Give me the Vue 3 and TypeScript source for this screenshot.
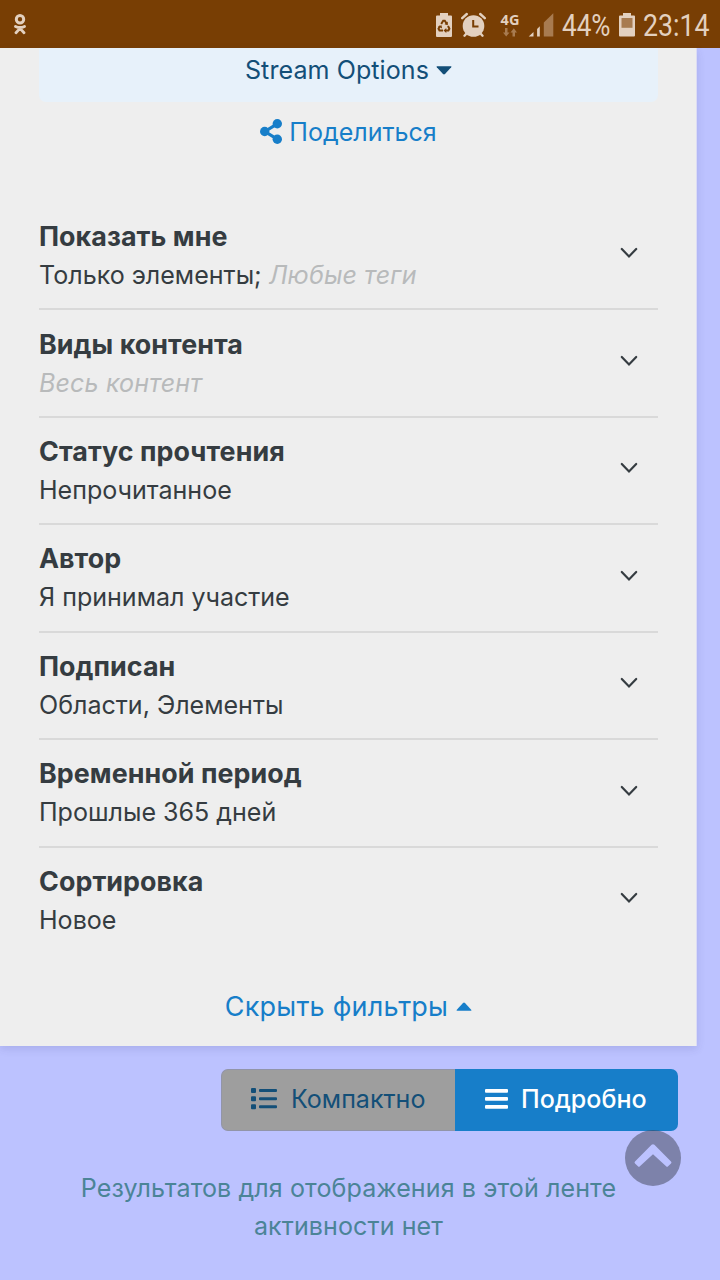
<script setup lang="ts">
interface FilterRow {
  title: string
  value?: string
  muted?: string
}

const filters: FilterRow[] = [
  { title: 'Показать мне', value: 'Только элементы;', muted: 'Любые теги' },
  { title: 'Виды контента', muted: 'Весь контент' },
  { title: 'Статус прочтения', value: 'Непрочитанное' },
  { title: 'Автор', value: 'Я принимал участие' },
  { title: 'Подписан', value: 'Области, Элементы' },
  { title: 'Временной период', value: 'Прошлые 365 дней' },
  { title: 'Сортировка', value: 'Новое' },
]
</script>

<template>
  <div class="screen">
    <header class="status">
      <svg class="ok" width="12" height="21" viewBox="0 0 12 21" fill="none" stroke="#e3d0bf">
        <circle cx="6" cy="5.2" r="3.7" stroke-width="3" />
        <path d="M1.5 12.4Q6 14.6 10.5 12.4M6 14.4L2 18.7M6 14.4L10 18.7" stroke-width="2.8" stroke-linecap="round" />
      </svg>
      <div class="status-right">
        <svg class="recycle" width="16" height="25" viewBox="0 0 16 25">
          <path d="M4 0h8v2.500h3q1 0 1 1v19.500q0 1-1 1H1q-1 0-1-1V3.500q0-1 1-1h3z" fill="#e3d0bf" />
          <g fill="none" stroke="#783e04" stroke-width="2">
            <path d="M5.200 11l2-3.200h1.600l1.900 3M12 13l1.400 2.800-1 1.800H9.300M7 17.600H3.500l-1-1.800 1.500-2.700" />
          </g>
          <path d="M11.800 8.500v3.800l-3.300-1zM10.300 15v5l-2.800-2.500zM2 13.300l3.500-1 .6 3.300z" fill="#783e04" />
        </svg>
        <svg class="alarm" width="25" height="26" viewBox="0 0 25 26">
          <circle cx="12.500" cy="14" r="10.800" fill="#e3d0bf" />
          <path d="M1.200 6.200L5.800 2M23.800 6.200L19.200 2M5.500 21.500l-2 2.200M19.500 21.500l2 2.200" stroke="#e3d0bf" stroke-width="2.400" stroke-linecap="round" />
          <path d="M12.200 8v6.500H17.500" fill="none" stroke="#783e04" stroke-width="2" />
        </svg>
        <div class="network">
          <span>4G</span>
          <svg width="14" height="9" viewBox="0 0 14 9" fill="#a87b50">
            <path d="M2 0h2.500v4.500h2L3.200 8.500 0 4.500h2zM9.500 8.500H12v-4h2L10.800.300 7.500 4.500h2z" />
          </svg>
        </div>
        <svg class="signal" width="25" height="24" viewBox="0 0 25 24">
          <path d="M-.3 23.500L4.500 19V23.500zM8.100 23.500V16L10.800 13.200V23.500z" fill="#e3d0bf" />
          <path d="M14.800 23.500V9.500L24.300.300V23.500z" fill="#a87b50" />
        </svg>
        <svg class="status-text percent" width="50" height="44" viewBox="0 0 50 44">
          <text x="0" y="33" textLength="48.500" lengthAdjust="spacingAndGlyphs">44%</text>
        </svg>
        <svg class="battery" width="16" height="24" viewBox="0 0 16 24">
          <path d="M4 0h8v2.500h3q1 0 1 1v19q0 1-1 1H1q-1 0-1-1v-19q0-1 1-1h3z" fill="#e3d0bf" />
          <path d="M2.500 5h11v9.800h-11z" fill="#a87b50" />
        </svg>
        <svg class="status-text clock" width="68" height="44" viewBox="0 0 68 44">
          <text x="0" y="33" textLength="66.500" lengthAdjust="spacingAndGlyphs">23:14</text>
        </svg>
      </div>
    </header>

    <section class="panel">
      <div class="options">
        <span>Stream Options</span>
        <svg width="16" height="9" viewBox="0 0 16 9"><path d="M1.200.200h13.600q1.200.200.400 1.100L9 8.100q-1 .9-2 0L.800 1.300Q0 .4 1.200.200z" fill="#134f78" /></svg>
      </div>
      <div class="share">
        <svg width="22" height="25" viewBox="0 0 22 25">
          <path d="M17.300 4.800L4.800 12.500l12.500 7.700" fill="none" stroke="#177ec9" stroke-width="3.200" />
          <g fill="#177ec9"><circle cx="17.300" cy="4.800" r="4.700" /><circle cx="4.700" cy="12.500" r="4.700" /><circle cx="17.300" cy="20.200" r="4.700" /></g>
        </svg>
        <span>Поделиться</span>
      </div>

      <ul class="filters">
        <li v-for="row in filters" :key="row.title">
          <div>
            <div class="title">{{ row.title }}</div>
            <div class="value">{{ row.value }} <em v-if="row.muted">{{ row.muted }}</em></div>
          </div>
          <svg class="chevron" width="18" height="12" viewBox="0 0 18 12"><path d="M1.800 2L9 9.400 16.200 2" fill="none" stroke="#353c41" stroke-width="2.200" stroke-linecap="round" /></svg>
        </li>
      </ul>

      <div class="hide">
        <span>Скрыть фильтры</span>
        <svg width="16" height="9" viewBox="0 0 16 9"><path d="M1.200 8.800h13.600q1.200-.2.400-1.100L9 .9q-1-.9-2 0L.800 7.700Q0 8.600 1.200 8.800z" fill="#177ec9" /></svg>
      </div>
    </section>

    <div class="toggle">
      <div class="btn compact">
        <svg width="26" height="22" viewBox="0 0 26 22" fill="#134f78">
          <rect y="0" width="5" height="5" rx="1" /><rect y="8.200" width="5" height="5" rx="1" /><rect y="16.200" width="5" height="5" rx="1" />
          <rect x="8" y="1" width="18" height="3" rx="1" /><rect x="8" y="9.200" width="18" height="3" rx="1" /><rect x="8" y="17.200" width="18" height="3" rx="1" />
        </svg>
        <span>Компактно</span>
      </div>
      <div class="btn detailed">
        <svg width="23" height="20" viewBox="0 0 23 20" fill="#fff">
          <rect y="0" width="23" height="3.800" rx="1" /><rect y="8" width="23" height="3.800" rx="1" /><rect y="16" width="23" height="3.800" rx="1" />
        </svg>
        <span>Подробно</span>
      </div>
    </div>

    <p class="empty">Результатов для отображения в этой ленте<br>активности нет</p>

    <div class="to-top">
      <svg width="56" height="56" viewBox="0 0 56 56"><path d="M28 14.200q.8 0 1.400.6L46 31.400q1 1 0 2l-2.900 2.900q-1 1-2 0L28 24.200 14.900 36.300q-1 1-2 0L10 33.400q-1-1 0-2L26.600 14.800q.6-.6 1.400-.6z" fill="#bcc2ff" /></svg>
    </div>
  </div>
</template>

<style>
body {
  margin: 0;
}
</style>

<style scoped>
.screen {
  position: relative;
  width: 720px;
  height: 1280px;
  overflow: hidden;
  background: #bcc2ff;
  font-family: Inter, sans-serif;
  font-size: 25.060px;
  color: #353c41;
}
.screen * {
  box-sizing: border-box;
}
svg {
  display: block;
  flex: none;
}
.status {
  display: flex;
  justify-content: space-between;
  height: 48px;
  padding: 0 9px 0 14px;
  background: #783e04;
}
.ok {
  margin-top: 14px;
}
.status-right {
  display: flex;
  align-items: flex-start;
}
.recycle {
  margin: 13px 9px 0 0;
}
.alarm {
  margin: 12px 14px 0 0;
}
.network {
  display: flex;
  flex-direction: column;
  align-items: center;
  width: 20px;
  margin: 13px 9px 0 0;
  font: 700 14.500px/14px "Open Sans", sans-serif;
  color: #e3d0bf;
}
.network svg {
  margin-top: 1px;
}
.signal {
  margin: 13px 8px 0 0;
  overflow: visible;
}
.status-text {
  margin-top: 3px;
  overflow: visible;
  font-family: Roboto, sans-serif;
  font-size: 31px;
  fill: #e3d0bf;
}
.percent {
  margin-right: 7px;
}
.battery {
  margin: 13px 8px 0 0;
}
.panel {
  width: 697px;
  height: 998px;
  padding: 0 38px 0 39px;
  background: #eee;
  border-right: 1px solid #dcdcf4;
  box-shadow: 0 3px 8px rgba(60, 60, 120, 0.14);
}
.options {
  display: flex;
  justify-content: center;
  gap: 7px;
  height: 54px;
  padding-top: 3px;
  background: #e7f1fa;
  border-radius: 0 0 7px 7px;
  color: #134f78;
  line-height: 38px;
  letter-spacing: 0.080px;
}
.options svg {
  margin-top: 15px;
}
.share {
  display: flex;
  justify-content: center;
  align-items: center;
  gap: 7px;
  height: 38px;
  margin-top: 11px;
  color: #177ec9;
  line-height: 38px;
}
.share svg {
  margin-bottom: 2px;
}
.filters {
  margin: 52px 0 0;
  padding: 0;
  list-style: none;
}
li {
  display: flex;
  justify-content: space-between;
  align-items: flex-start;
  height: 107.430px;
  padding-top: 14.150px;
  border-bottom: 2px solid #d9d9d9;
}
li:last-child {
  border-bottom-color: transparent;
}
.title {
  font-size: 26.850px;
  font-weight: 700;
  line-height: 39px;
  letter-spacing: 0.050px;
}
.value {
  line-height: 38px;
}
em {
  color: #b8babb;
  letter-spacing: 0.150px;
}
.chevron {
  margin: 30.350px 20px 0 0;
}
.hide {
  display: flex;
  justify-content: center;
  gap: 8px;
  margin-top: 32px;
  color: #177ec9;
  font-size: 27px;
  line-height: 40px;
  letter-spacing: 0.200px;
}
.hide svg {
  margin-top: 15px;
}
.toggle {
  display: flex;
  justify-content: flex-end;
  margin: 23px 42px 0 0;
}
.btn {
  display: flex;
  align-items: center;
  height: 62px;
}
.btn span {
  margin-top: -2px;
}
.compact {
  width: 234px;
  padding-left: 29px;
  gap: 14px;
  background: #9e9e9e;
  border: 1px solid #9295a8;
  border-right: 0;
  border-radius: 7px 0 0 7px;
  color: #134f78;
}
.compact svg,
.detailed svg {
  margin-top: -2px;
}
.detailed {
  width: 223px;
  padding-left: 30px;
  gap: 13px;
  background: #177ec9;
  border-radius: 0 7px 7px 0;
  color: #fff;
  font-weight: 500;
}
.empty {
  width: 697px;
  margin: 38px 0 0;
  color: #4b8497;
  text-align: center;
  line-height: 38px;
  letter-spacing: 0.100px;
}
.to-top {
  position: absolute;
  left: 625px;
  top: 1130px;
  width: 56px;
  height: 56px;
  border-radius: 50%;
  background: rgba(62, 66, 86, 0.5);
}
</style>
